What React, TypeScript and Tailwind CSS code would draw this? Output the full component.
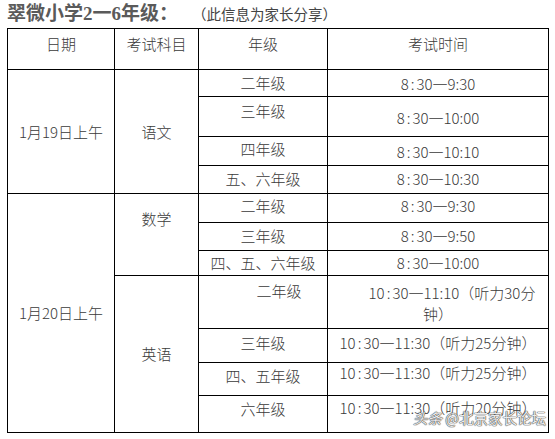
import React from "react"

type Row = {
  h: string
  gradePt: string
  timePt: string
  grade: string
  time: React.ReactNode
  lead?: React.ReactNode
}

const cell = "border border-black p-0 align-top text-center"

function Time({ a, b, extra }: { a: string; b: string; extra?: string }) {
  const [h, m] = a.split(":")
  return (
    <span>
      {h}
      <span className="px-[2px]">:</span>
      {m}一{b}
      {extra}
    </span>
  )
}

const ROWS: Row[] = [
  {
    h: "h-[27px]",
    gradePt: "pt-[3px]",
    timePt: "pt-[4px]",
    grade: "二年级",
    time: <Time a="8:30" b="9:30" />,
    lead: (
      <>
        <td rowSpan={4} className="border border-black p-0 align-middle text-center">
          1月19日上午
        </td>
        <td rowSpan={4} className="border border-black p-0 align-middle text-center">
          语文
        </td>
      </>
    ),
  },
  { h: "h-[40px]", gradePt: "pt-[4px]", timePt: "pt-[11px]", grade: "三年级", time: <Time a="8:30" b="10:00" /> },
  { h: "h-[29px]", gradePt: "pt-[2px]", timePt: "pt-[5px]", grade: "四年级", time: <Time a="8:30" b="10:10" /> },
  { h: "h-[28px]", gradePt: "pt-[3px]", timePt: "pt-[3px]", grade: "五、六年级", time: <Time a="8:30" b="10:30" /> },
  {
    h: "h-[29px]",
    gradePt: "pt-[2px]",
    timePt: "pt-[2px]",
    grade: "二年级",
    time: <Time a="8:30" b="9:30" />,
    lead: (
      <>
        <td rowSpan={7} className="border border-black p-0 align-middle text-center">
          1月20日上午
        </td>
        <td rowSpan={3} className="border border-black p-0 pt-[15px] align-top text-center">
          数学
        </td>
      </>
    ),
  },
  { h: "h-[28px]", gradePt: "pt-[3px]", timePt: "pt-[3px]", grade: "三年级", time: <Time a="8:30" b="9:50" /> },
  { h: "h-[25px]", gradePt: "pt-[2px]", timePt: "pt-[2px]", grade: "四、五、六年级", time: <Time a="8:30" b="10:00" /> },
  {
    h: "h-[53px]",
    gradePt: "pt-[5px] pl-[32px]",
    timePt: "pt-[6px]",
    grade: "二年级",
    time: (
      <>
        <span className="block pl-[28px] leading-[21px]">
          <Time a="10:30" b="11:10" extra="（听力30分" />
        </span>
        <span className="block leading-[21px]">钟）</span>
      </>
    ),
    lead: (
      <td rowSpan={4} className="border border-black p-0 align-middle text-center">
        英语
      </td>
    ),
  },
  {
    h: "h-[34px]",
    gradePt: "pt-[4px]",
    timePt: "pt-[4px]",
    grade: "三年级",
    time: <Time a="10:30" b="11:30" extra="（听力25分钟）" />,
  },
  {
    h: "h-[33px]",
    gradePt: "pt-[3px]",
    timePt: "pt-[0px]",
    grade: "四、五年级",
    time: <Time a="10:30" b="11:30" extra="（听力25分钟）" />,
  },
  {
    h: "h-[37px]",
    gradePt: "pt-[3px]",
    timePt: "pt-[2px]",
    grade: "六年级",
    time: <Time a="10:30" b="11:30" extra="（听力20分钟）" />,
  },
]

export default function App() {
  return (
    <div className="relative h-[439px] w-[555px] overflow-hidden bg-white font-['Noto_Sans_CJK_SC',sans-serif] text-[15px] leading-[20px] text-[#3a3a3a]">
      <div className="flex h-[28px] items-center pl-[7px] pt-[0px]">
        <span className="font-['Liberation_Serif','Noto_Sans_CJK_SC',serif] text-[19px] font-bold leading-[24px] text-[#5a5a5a]">
          翠微小学2一6年级：
        </span>
        <span className="ml-[14px] text-[14.5px] leading-[20px] text-[#444]">（此信息为家长分享）</span>
      </div>

      <table className="ml-[7px] w-[541px] table-fixed border-collapse font-light">
        <colgroup>
          <col className="w-[107px]" />
          <col className="w-[84px]" />
          <col className="w-[129px]" />
          <col className="w-[221px]" />
        </colgroup>
        <tbody>
          <tr className="h-[41px]">
            <td className={`${cell} pt-[5px]`}>日期</td>
            <td className={`${cell} pt-[5px]`}>考试科目</td>
            <td className={`${cell} pt-[5px]`}>年级</td>
            <td className={`${cell} pt-[5px]`}>考试时间</td>
          </tr>
          {ROWS.map((r, i) => (
            <tr key={i} className={r.h}>
              {r.lead}
              <td className={`${cell} ${r.gradePt}`}>{r.grade}</td>
              <td className={`${cell} ${r.timePt} whitespace-nowrap`}>{r.time}</td>
            </tr>
          ))}
        </tbody>
      </table>

      <div className="absolute left-[413px] top-[408px] text-[14.5px] leading-[20px] text-white/90 [text-shadow:0_0_1px_#444,0_0_1px_#444,0_0_1px_#444]">
        <span className="italic">头条</span> @北京家长论坛
      </div>
    </div>
  )
}
